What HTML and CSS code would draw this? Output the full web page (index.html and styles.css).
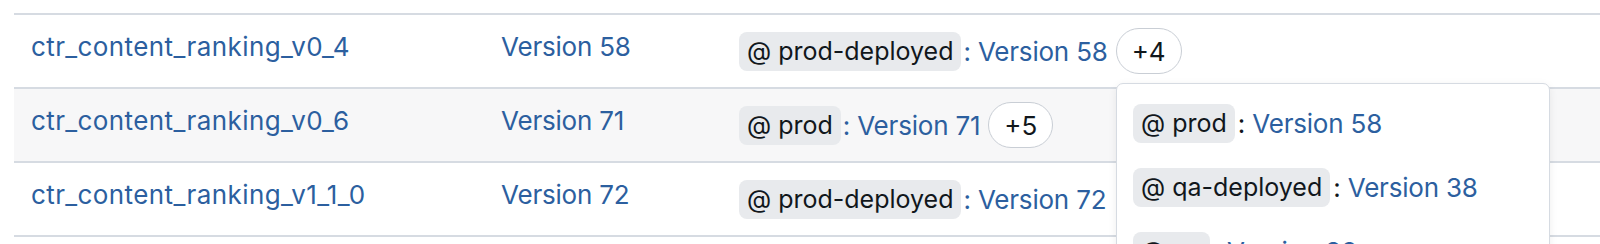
FILE: index.html
```html
<!DOCTYPE html>
<html>
<head>
<meta charset="utf-8">
<link rel="stylesheet" href="styles.css">
</head>
<body>
<div class="page">
  <div class="table">
    <div class="row">
      <div class="cell plain"><a class="link name">ctr_content_ranking_v0_4</a></div>
      <div class="cell plain"><a class="link">Version 58</a></div>
      <div class="cell aliases">
        <span class="alias">@ prod-deployed</span><a class="link">: Version 58</a>
        <button class="more">+4</button>
      </div>
    </div>
    <div class="row alt">
      <div class="cell plain"><a class="link name">ctr_content_ranking_v0_6</a></div>
      <div class="cell plain"><a class="link">Version 71</a></div>
      <div class="cell aliases">
        <span class="alias">@ prod</span><a class="link">: Version 71</a>
        <button class="more">+5</button>
      </div>
    </div>
    <div class="row">
      <div class="cell plain"><a class="link name">ctr_content_ranking_v1_1_0</a></div>
      <div class="cell plain"><a class="link">Version 72</a></div>
      <div class="cell aliases">
        <span class="alias">@ prod-deployed</span><a class="link">: Version 72</a>
      </div>
    </div>
  </div>
  <div class="popover">
    <div class="pop-item"><span class="alias">@ prod</span><span class="sep">:</span><a class="link">Version 58</a></div>
    <div class="pop-item"><span class="alias">@ qa-deployed</span><span class="sep">:</span><a class="link">Version 38</a></div>
    <div class="pop-item"><span class="alias">@ qa</span><span class="sep">:</span><a class="link">Version 38</a></div>
  </div>
</div>
</body>
</html>
```

FILE: styles.css
```css
html, body {
  margin: 0;
  padding: 0;
  background: #ffffff;
  overflow: hidden;
}
body {
  font-family: Inter, "Noto Sans", sans-serif;
  font-size: 26px;
  color: #11171c;
}
.page {
  position: relative;
  width: 1600px;
  height: 244px;
  padding-top: 13px;
  padding-left: 14px;
  box-sizing: border-box;
}
.table {
  border-top: 2px solid #d6dbe2;
}
.row {
  display: grid;
  grid-template-columns: 470px 238px 1fr;
  height: 72px;
  border-bottom: 2px solid #d6dbe2;
  align-items: center;
}
.row.alt {
  background: #f7f7f8;
}
.cell {
  padding-left: 17px;
  white-space: nowrap;
}
.cell.plain {
  padding-bottom: 9px;
}
.link {
  color: #2c5f9f;
  text-decoration: none;
  letter-spacing: -0.2px;
}
.link.name {
  letter-spacing: 0.4px;
}
.aliases {
  display: flex;
  align-items: center;
}
.alias {
  display: inline-block;
  background: #e8eaed;
  border-radius: 8px;
  padding: 0 8px;
  line-height: 39px;
  height: 39px;
  font-size: 25px;
  color: #11171c;
}
.aliases .link {
  margin-left: 2px;
}
.more {
  margin-left: 8px;
  height: 46px;
  padding: 0 15px;
  border: 1px solid #c9ced5;
  border-radius: 23px;
  background: #ffffff;
  font: inherit;
  color: #11171c;
}
.popover {
  position: absolute;
  left: 1116px;
  top: 83px;
  width: 434px;
  height: 200px;
  box-sizing: border-box;
  background: #ffffff;
  border: 1px solid #d6dbe2;
  border-radius: 7px;
  box-shadow: 0 2px 8px rgba(0, 0, 0, 0.07);
  padding: 20px 16px;
  display: flex;
  flex-direction: column;
  gap: 25px;
}
.pop-item {
  display: flex;
  align-items: center;
  white-space: nowrap;
}
.sep {
  margin: 0 7px 0 3px;
}
```
